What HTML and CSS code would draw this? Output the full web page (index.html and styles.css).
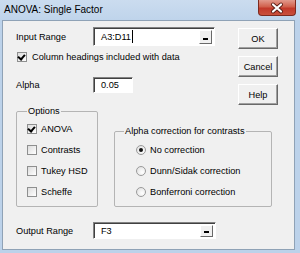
FILE: index.html
```html
<!DOCTYPE html>
<html>
<head>
<meta charset="utf-8">
<title>ANOVA: Single Factor</title>
<link rel="stylesheet" href="styles.css">
</head>
<body>
<div class="window">
  <div class="titlebar">
    <span class="title">ANOVA: Single Factor</span>
    <div class="close">
      <svg width="38" height="17" viewBox="0 0 38 17">
        <path d="M15 4.5 L23 11.5 M23 4.5 L15 11.5" stroke="#5a1e16" stroke-width="4" stroke-linecap="round"/>
        <path d="M15 4.5 L23 11.5 M23 4.5 L15 11.5" stroke="#fff" stroke-width="2.2" stroke-linecap="round"/>
      </svg>
    </div>
  </div>

  <div class="client">
    <div class="top">
      <div class="fields">
        <div class="field-row">
          <span class="field-label">Input Range</span>
          <div class="textbox refedit">
            <span class="value">A3:D11</span><span class="caret"></span>
            <span class="collapse"><span class="bar"></span></span>
          </div>
        </div>
        <div class="check headings"><span class="box checked"></span>Column headings included with data</div>
        <div class="field-row alpha-row">
          <span class="field-label">Alpha</span>
          <div class="textbox alpha"><span class="value">0.05</span></div>
        </div>
      </div>
      <div class="buttons">
        <div class="btn">OK</div>
        <div class="btn">Cancel</div>
        <div class="btn">Help</div>
      </div>
    </div>

    <div class="groups">
      <fieldset class="group options">
        <legend>Options</legend>
        <div class="check"><span class="box checked"></span>ANOVA</div>
        <div class="check"><span class="box"></span>Contrasts</div>
        <div class="check"><span class="box"></span>Tukey HSD</div>
        <div class="check"><span class="box"></span>Scheffe</div>
      </fieldset>
      <fieldset class="group correction">
        <legend>Alpha correction for contrasts</legend>
        <div class="radios">
          <div class="radio"><span class="dot on"></span>No correction</div>
          <div class="radio"><span class="dot"></span>Dunn/Sidak correction</div>
          <div class="radio"><span class="dot"></span>Bonferroni correction</div>
        </div>
      </fieldset>
    </div>

    <div class="field-row output-row">
      <span class="field-label">Output Range</span>
      <div class="textbox refedit output">
        <span class="value">F3</span>
        <span class="collapse"><span class="bar"></span></span>
      </div>
    </div>
  </div>
</div>
</body>
</html>
```

FILE: styles.css
```css
body {
  margin: 0;
  width: 300px;
  height: 253px;
  overflow: hidden;
  background: #bcd2ea;
  font-family: "Liberation Sans", Arial, sans-serif;
  font-size: 9.2px;
  color: #000;
}

.window {
  height: 253px;
  display: flex;
  flex-direction: column;
}

/* title bar */
.titlebar {
  height: 20px;
  flex: none;
  display: flex;
  justify-content: space-between;
  background: linear-gradient(#cbdcef, #bfd4eb);
}

.title {
  padding-left: 4px;
  font-size: 10px;
  line-height: 19px;
}

.close {
  width: 38px;
  height: 16px;
  margin-right: 4px;
  box-sizing: border-box;
  border: 1px solid #7d2a1f;
  border-top: none;
  border-radius: 0 0 4px 4px;
  background: linear-gradient(#e29a8c, #d1604c 45%, #c2392a 55%, #c9503c);
}

.close svg {
  display: block;
  margin-left: -1px;
}

/* client area */
.client {
  flex: 1;
  margin: 0 5px 3px 2px;
  padding: 6px 0 0 13px;
  background: #f0f0f0;
  border: 1px solid #8fa2b6;
}

.top {
  display: flex;
  height: 78px;
}

.fields {
  width: 222px;
}

.field-row {
  display: flex;
  align-items: center;
}

.field-label {
  width: 77px;
}

.textbox {
  box-sizing: border-box;
  height: 19px;
  display: flex;
  align-items: center;
  padding-left: 7px;
  background: #fff;
  border-top: 1px solid #828282;
  border-left: 1px solid #828282;
  border-right: 1px solid #fff;
  border-bottom: 1px solid #fff;
  box-shadow: inset 1px 1px 0 #404040;
  position: relative;
}

.refedit {
  width: 122px;
}

.refedit.output {
  width: 123px;
  height: 17px;
}

.alpha {
  width: 40px;
  height: 16px;
}

.caret {
  width: 1px;
  height: 13px;
  margin-left: 1px;
  background: #000;
}

.collapse {
  position: absolute;
  right: 2px;
  top: 2px;
  bottom: 1px;
  width: 13px;
  box-sizing: border-box;
  background: #f0f0f0;
  border-top: 1px solid #fff;
  border-left: 1px solid #fff;
  border-right: 1px solid #696969;
  border-bottom: 1px solid #696969;
}

.collapse .bar {
  position: absolute;
  left: 3px;
  bottom: 3px;
  width: 5px;
  height: 2px;
  background: #000;
}

.check {
  display: flex;
  align-items: center;
  height: 21px;
}

.check.headings {
  height: 10px;
  margin-top: 6px;
  padding-left: 1px;
}

.box {
  width: 10px;
  height: 10px;
  box-sizing: border-box;
  margin-right: 4px;
  border: 1px solid #8e8f8f;
  background: linear-gradient(135deg, #dcdcdc, #fff);
  position: relative;
}

.headings .box {
  margin-right: 5px;
}

.box.checked::after {
  content: "";
  position: absolute;
  left: 1px;
  top: 0;
  width: 3px;
  height: 5px;
  border-right: 2px solid #000;
  border-bottom: 2px solid #000;
  transform: rotate(40deg);
}

.alpha-row {
  margin-top: 15px;
}

.buttons {
  display: flex;
  flex-direction: column;
  gap: 7px;
  padding-top: 1px;
}

.btn {
  width: 40px;
  height: 21px;
  box-sizing: border-box;
  display: flex;
  align-items: center;
  justify-content: center;
  background: #f0f0f0;
  border-top: 1px solid #fff;
  border-left: 1px solid #fff;
  border-right: 1px solid #696969;
  border-bottom: 1px solid #696969;
  box-shadow: inset -1px -1px 0 #a0a0a0;
}

/* group boxes */
.groups {
  display: flex;
  align-items: flex-end;
  gap: 16px;
}

.group {
  margin: 0;
  min-width: 0;
  border: 1px solid #b4b4b4;
  border-radius: 2px;
  padding-bottom: 4px;
}

.group legend {
  padding: 0 1px;
  line-height: 12px;
}

.options {
  width: 82px;
  box-sizing: border-box;
  padding: 1px 0 4px 10px;
}

.correction {
  width: 158px;
  box-sizing: border-box;
  padding: 2px 0 4px 9px;
}

.radios {
  padding-left: 12px;
}

.radio {
  display: flex;
  align-items: center;
  height: 21px;
}

.dot {
  width: 10px;
  height: 10px;
  box-sizing: border-box;
  margin-right: 4px;
  border: 1px solid #9a9a9a;
  border-radius: 50%;
  background: radial-gradient(circle at 65% 65%, #fff, #dcdcdc);
  position: relative;
}

.dot.on::after {
  content: "";
  position: absolute;
  left: 2px;
  top: 2px;
  width: 4px;
  height: 4px;
  border-radius: 50%;
  background: #111;
}

.output-row {
  margin-top: 15px;
}
```
